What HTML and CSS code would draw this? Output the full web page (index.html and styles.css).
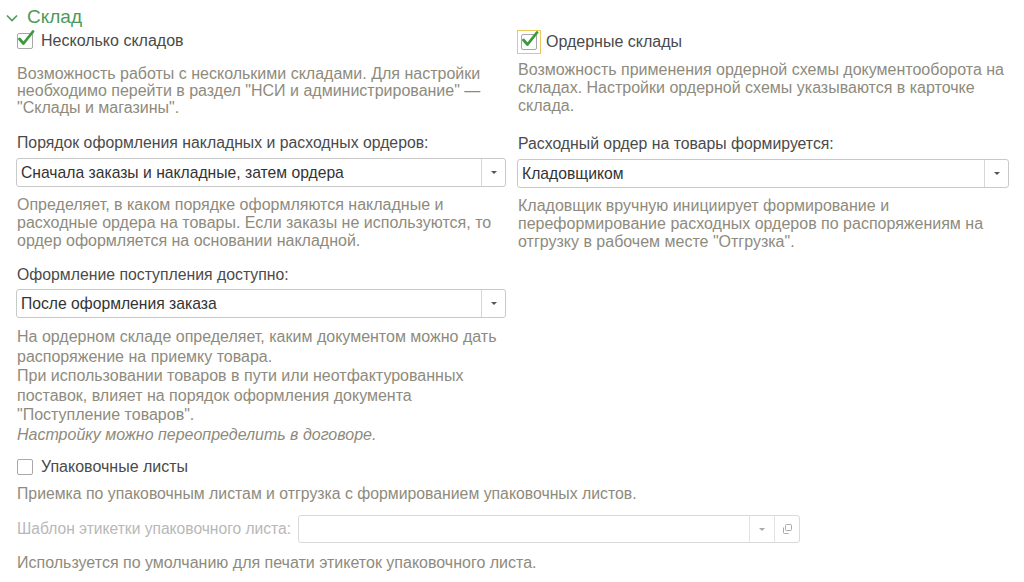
FILE: index.html
```html
<!DOCTYPE html>
<html lang="ru">
<head>
    <meta charset="UTF-8">
    <title>Склад</title>
    <link rel="stylesheet" href="styles.css">
</head>
<body>
    <div class="group">
        <div class="group-title">
            <svg class="chevron" width="12" height="8" viewBox="0 0 12 8"><path d="M1 1.5 L6 6.5 L11 1.5" fill="none" stroke="#4b9b5b" stroke-width="1.6"/></svg>
            <span>Склад</span>
        </div>

        <div class="columns">
            <div class="column">
                <label class="check-row">
                    <span class="checkbox checked">
                        <svg width="20" height="18" viewBox="0 0 20 18"><path d="M3.5 9 L7.5 13.5 L17 1.5" fill="none" stroke="#3b9b3b" stroke-width="2.8" stroke-linecap="round" stroke-linejoin="round"/></svg>
                    </span>
                    <span class="check-label">Несколько складов</span>
                </label>
                <p class="hint tight first">Возможность работы с несколькими складами. Для настройки необходимо перейти в раздел "НСИ и администрирование" — "Склады и магазины".</p>

                <div class="field-title">Порядок оформления накладных и расходных ордеров:</div>
                <div class="select">
                    <span class="select-value">Сначала заказы и накладные, затем ордера</span>
                    <span class="select-btn"><i class="arrow"></i></span>
                </div>
                <p class="hint">Определяет, в каком порядке оформляются накладные и расходные ордера на товары. Если заказы не используются, то ордер оформляется на основании накладной.</p>

                <div class="field-title second">Оформление поступления доступно:</div>
                <div class="select second">
                    <span class="select-value">После оформления заказа</span>
                    <span class="select-btn"><i class="arrow"></i></span>
                </div>
                <p class="hint loose">На ордерном складе определяет, каким документом можно дать распоряжение на приемку товара.<br>При использовании товаров в пути или неотфактурованных поставок, влияет на порядок оформления документа "Поступление товаров".<br><em>Настройку можно переопределить в договоре.</em></p>
            </div>

            <div class="column">
                <label class="check-row focused">
                    <span class="focus-frame">
                        <span class="checkbox checked">
                            <svg width="20" height="18" viewBox="0 0 20 18"><path d="M3.5 9 L7.5 13.5 L17 1.5" fill="none" stroke="#3b9b3b" stroke-width="2.8" stroke-linecap="round" stroke-linejoin="round"/></svg>
                        </span>
                    </span>
                    <span class="check-label">Ордерные склады</span>
                </label>
                <p class="hint right-first">Возможность применения ордерной схемы документооборота на складах. Настройки ордерной схемы указываются в карточке склада.</p>

                <div class="field-title">Расходный ордер на товары формируется:</div>
                <div class="select">
                    <span class="select-value">Кладовщиком</span>
                    <span class="select-btn"><i class="arrow"></i></span>
                </div>
                <p class="hint">Кладовщик вручную инициирует формирование и переформирование расходных ордеров по распоряжениям на отгрузку в рабочем месте "Отгрузка".</p>
            </div>
        </div>

        <div class="bottom">
            <label class="check-row">
                <span class="checkbox"></span>
                <span class="check-label">Упаковочные листы</span>
            </label>
            <p class="hint wide">Приемка по упаковочным листам и отгрузка с формированием упаковочных листов.</p>

            <div class="template-row">
                <span class="template-label">Шаблон этикетки упаковочного листа:</span>
                <div class="select disabled">
                    <span class="select-value"></span>
                    <span class="select-btn"><i class="arrow"></i></span>
                    <span class="select-btn open">
                        <svg width="12" height="12" viewBox="0 0 12 12"><rect x="4.5" y="1.5" width="6" height="6" rx="1" fill="none" stroke="#aaa"/><path d="M2.5 4.5 V9.5 A1 1 0 0 0 3.5 10.5 H7.5" fill="none" stroke="#aaa"/></svg>
                    </span>
                </div>
            </div>
            <p class="hint wide last">Используется по умолчанию для печати этикеток упаковочного листа.</p>
        </div>
    </div>
</body>
</html>
```
FILE: styles.css
```css
body {
    margin: 0;
    background: #fff;
    font-family: "Liberation Sans", Arial, sans-serif;
    color: #4a4a4a;
}
.group {
    padding: 4px 15px 0 16px;
}
.group-title {
    display: flex;
    align-items: center;
    gap: 9px;
    height: 26px;
    margin-left: -10px;
    color: #4b9b5b;
    font-size: 19px;
}
.chevron {
    margin-top: 2px;
}
.columns {
    display: grid;
    grid-template-columns: 490px 492px;
    gap: 11px;
}
.column {
    display: flex;
    flex-direction: column;
}
.check-row {
    display: flex;
    align-items: center;
    height: 20px;
    margin-top: 1px;
    font-size: 16px;
}
.checkbox {
    position: relative;
    width: 14px;
    height: 14px;
    border: 1px solid #a8a8a8;
    border-radius: 2px;
    background: #fff;
    margin: 0 8px 0 1px;
    flex: none;
}
.checkbox svg {
    position: absolute;
    left: -2px;
    top: -4px;
}
.check-row.focused {
    height: 24px;
    margin-top: 0;
}
.focus-frame {
    display: flex;
    padding: 3px;
    border: 1px solid #ecc95a;
    margin-right: 5px;
}
.focus-frame .checkbox {
    margin: 0;
}
.check-label {
    color: #4a4a4a;
}
.hint {
    margin: 9px 0 0 1px;
    font-size: 16px;
    line-height: 18px;
    color: #8e8b7d;
}
.hint.tight {
    line-height: 17px;
}
.hint.first {
    margin-top: 14px;
}
.hint.right-first {
    margin-top: 7px;
}
.hint.loose {
    line-height: 19.5px;
}
.hint em {
    font-style: italic;
}
.field-title {
    margin: 18px 0 6px 1px;
    font-size: 15.8px;
    line-height: 18px;
    color: #4a4a4a;
}
.column:last-child .field-title {
    margin-top: 20px;
}
.field-title.second {
    margin-top: 16px;
    margin-bottom: 5px;
}
.select {
    display: flex;
    height: 27px;
    border: 1px solid #c9c9c9;
    border-radius: 3px;
    background: #fff;
}
.select-value {
    flex: 1;
    padding-left: 4px;
    font-size: 15.7px;
    line-height: 27px;
    color: #333;
}
.select-btn {
    width: 23px;
    display: flex;
    align-items: center;
    justify-content: center;
    border-left: 1px solid #d6d6d6;
}
.arrow {
    width: 0;
    height: 0;
    border-left: 3px solid transparent;
    border-right: 3px solid transparent;
    border-top: 3px solid #555;
}
.bottom {
    display: flex;
    flex-direction: column;
}
.bottom .check-row {
    margin-top: 13px;
}
.hint.wide {
    margin-top: 8px;
    font-size: 15.8px;
}
.template-row {
    display: flex;
    align-items: center;
    margin-top: 12px;
}
.template-label {
    width: 281px;
    margin-left: 1px;
    font-size: 15.6px;
    color: #b8b8b8;
    white-space: nowrap;
}
.select.disabled {
    width: 500px;
    height: 26px;
    border-color: #d9d9d9;
}
.select.disabled .select-btn {
    width: 24px;
    border-left-color: #e3e3e3;
}
.select.disabled .arrow {
    border-top-color: #aaa;
}
.hint.last {
    margin-top: 11px;
    font-size: 16px;
}
```
